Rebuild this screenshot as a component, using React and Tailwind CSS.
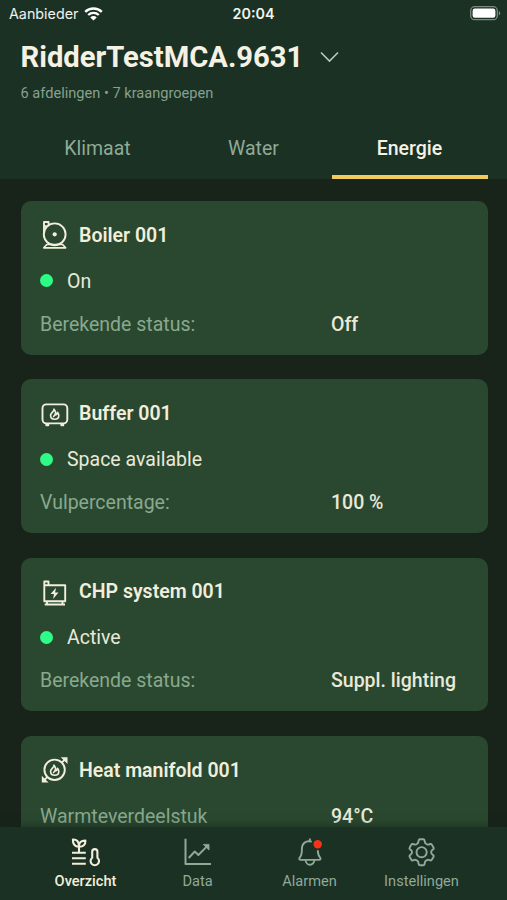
import clsx from "clsx";

const Flame = () => (
  <path
    d="M14 11.200c.4 2.300-3.400 3.500-3.400 6.300 0 2.200 1.800 3.700 4.100 3.700s4.100-1.500 4.100-3.800c0-1.300-.5-2.200-1.300-3-.2 1.500-1.200 2.600-2.800 2.700 1.200-1.900.9-4.200-.7-5.900zM14.700 17.200c-.9.700-1.300 1.300-1.100 2"
    strokeWidth="1.600"
  />
);

const BoilerIcon = () => (
  <>
    <circle cx="14.700" cy="14.300" r="10.900" />
    <circle cx="14.700" cy="14.300" r="2.100" fill="currentColor" stroke="none" />
    <path d="M4 14V2h4.600v3.400M4 6.200h3" />
    <path d="M6.800 24.500h15.800l3 3.300H3.800z" strokeWidth="1.700" />
  </>
);

const BufferIcon = () => (
  <>
    <rect x="2.500" y="6.400" width="24.800" height="19" rx="3.800" />
    <path d="M6.300 25.900v1.400h2v-1.400M21.300 25.900v1.400h2v-1.400" />
    <Flame />
  </>
);

const ChpIcon = () => (
  <>
    <path d="M4.300 24.300V4.500h4.200v3.800h16.700v16zM4.300 8.300h4.200" />
    <path d="M7 24.500v2.500M22.500 24.500v2.500M4.700 27.500h20.300" />
    <path d="M16 10.800l-5.400 6.200h3.400l-.9 5.100 5.400-6.500h-3.400z" fill="currentColor" stroke="none" />
  </>
);

const HeatIcon = () => (
  <>
    <circle cx="14.600" cy="14.800" r="10.200" />
    <path d="M21.500 7.900l4-4M7.700 21.700l-4 4" />
    <path d="M20.800 2.200h6.700v6.700zM1.800 20.700v6.700h6.700z" fill="currentColor" stroke="none" />
    <g transform="translate(0 -1)">
      <Flame />
    </g>
  </>
);

const OverviewIcon = () => (
  <g strokeWidth="2.100">
    <path d="M2 15.700h13.800M2 21.300h13.800M2 26.700h13.800M9 15.500V9" />
    <path d="M9 9.700C4.700 9.700 2.700 7 2.900 2.500 7 2.300 9.200 5 9 9.700zM9 9.700c-.2-4 2-6.200 6.400-6.100.2 4-2.200 6.300-6.400 6.100z" />
    <path d="M22.200 20.700v-6a2.600 2.600 0 0 1 5.200 0v6a4.200 4.200 0 1 1-5.200 0z" />
  </g>
);

const DataIcon = () => (
  <>
    <path d="M3.500 1.700v25.400h25.500" strokeWidth="2" />
    <path d="M6.700 21l6.100-6.500 3.600 3.500 8.300-8.300" />
    <path d="M21.300 7.400h5.700v5.700z" fill="currentColor" strokeWidth="0.800" />
  </>
);

const AlarmIcon = () => (
  <>
    <path d="M15.900 1.500v2.700M17.800 4.700c-6.500-1.700-9.900 2.200-9.900 7.300 0 5-.5 6.900-2.200 8.600-.9 1-.3 2.300.9 2.300h18.600c1.200 0 1.800-1.300.9-2.300-1.500-1.500-2.200-3.200-2.300-7.300" />
    <path d="M11.700 23.200a4.300 4.600 0 0 0 8.600 0" />
    <circle cx="23.700" cy="7.300" r="4.200" fill="#f5331a" stroke="none" />
  </>
);

const SettingsIcon = () => (
  <>
    <path d="M12.700 3.200q.2-1 1.200-1h3.400q1 0 1.200 1l.4 2q.2 1 1.100 1.500l1 .6q.9.500 1.800.2l1.500-.5q1-.3 1.500.600l1.800 3.100q.5.900-.3 1.500l-1.300 1.100q-.8.700-.8 1.900t.8 1.900l1.300 1.100q.8.700.3 1.500l-1.800 3.100q-.5.900-1.500.6l-1.500-.5q-.9-.3-1.800.2l-1 .6q-.9.500-1.100 1.500l-.4 2q-.2 1-1.200 1h-3.400q-1 0-1.200-1l-.4-2q-.2-1-1.100-1.500l-1-.6q-.9-.5-1.800-.2l-1.500.5q-1 .3-1.500-.6l-1.800-3.100q-.5-.9.3-1.500l1.300-1.100q.8-.7.8-1.900t-.8-1.900l-1.300-1.100q-.8-.7-.3-1.500l1.800-3.100q.5-.9 1.500-.6l1.500.5q.9.300 1.800-.2l1-.6q.9-.5 1.100-1.500z" />
    <circle cx="15.600" cy="15.200" r="5.100" />
  </>
);

const Icon = ({ children }) => (
  <svg
    className="size-[30px] shrink-0"
    viewBox="0 0 30 30"
    fill="none"
    stroke="currentColor"
    strokeWidth="1.900"
    strokeLinejoin="round"
  >
    {children}
  </svg>
);

const cards = [
  { title: "Boiler 001", icon: <BoilerIcon />, status: "On", label: "Berekende status:", value: "Off" },
  { title: "Buffer 001", icon: <BufferIcon />, status: "Space available", label: "Vulpercentage:", value: "100 %" },
  { title: "CHP system 001", icon: <ChpIcon />, status: "Active", label: "Berekende status:", value: "Suppl. lighting" },
  { title: "Heat manifold 001", icon: <HeatIcon />, label: "Warmteverdeelstuk", value: "94°C" },
];

const navItems = [
  { label: "Overzicht", icon: <OverviewIcon />, active: true },
  { label: "Data", icon: <DataIcon /> },
  { label: "Alarmen", icon: <AlarmIcon /> },
  { label: "Instellingen", icon: <SettingsIcon /> },
];

const StatusBar = () => (
  <div className="grid h-7 grid-cols-3 items-center pl-[9px] pr-[6px] font-[Inter] text-[14.300px] text-[#f1f3ee]">
    <div className="flex items-center gap-[6px]">
      Aanbieder
      <svg className="mb-px h-[14px] w-[19px]" viewBox="0 0 19 14" fill="none" stroke="white" strokeWidth="2.400">
        <path d="M1.200 4.800a12 12 0 0 1 16.600 0M4.200 8a7.700 7.700 0 0 1 10.600 0" />
        <path d="M9.500 13.600 6.300 10.400a4.600 4.600 0 0 1 6.400 0z" fill="white" stroke="none" />
      </svg>
    </div>
    <div className="pr-[3px] text-center font-semibold">20:04</div>
    <svg className="mb-[2px] h-[15px] w-[31px] justify-self-end" viewBox="0 0 31 15">
      <rect x="0.700" y="0.700" width="26.600" height="13" rx="4" fill="none" stroke="#7d8981" strokeWidth="1.300" />
      <rect x="2.600" y="2.600" width="22.800" height="9.200" rx="2.300" fill="white" />
      <path d="M28.800 5c2 .9 2 3.600 0 4.500z" fill="#7d8981" />
    </svg>
  </div>
);

const Tab = ({ label, active }) => (
  <div
    className={clsx(
      "flex-1 border-b-4 pb-[11px] text-center text-[19.500px] leading-[30px]",
      active ? "border-[#efcb5e] font-medium text-[#f5f2e3]" : "border-transparent text-[#8faa98]"
    )}
  >
    {label}
  </div>
);

const Card = ({ title, icon, status, label, value }) => (
  <section className="h-[153.500px] shrink-0 rounded-[10px] bg-[#2a482f] px-[19.500px] pt-[19px] text-[19.500px] leading-[30px] text-[#e9e9d9]">
    <div className="flex h-[30px] gap-[9px] text-[#f2eedc]">
      <Icon>{icon}</Icon>
      <h2 className="pt-[0.700px] font-semibold">{title}</h2>
    </div>
    {status && (
      <div className="mt-[16.700px] flex items-center gap-[14px]">
        <span className="mb-[2px] size-[13px] rounded-full bg-[#2dfd86]" />
        {status}
      </div>
    )}
    <div className={clsx("flex", status ? "mt-[13px]" : "mt-[16.700px]")}>
      <span className="w-[291px] text-[#89a98f]">{label}</span>
      <span className="font-medium">{value}</span>
    </div>
  </section>
);

export default function App() {
  return (
    <div className="flex h-[900px] w-[507px] flex-col overflow-hidden bg-[#18231a] font-[Roboto,sans-serif]">
      <header className="h-[179px] shrink-0 bg-[#1b3124]">
        <StatusBar />
        <div className="flex items-center gap-[17px] pl-[20.500px] pt-[9px]">
          <h1 className="text-[29.200px] font-bold leading-10 text-[#f5f2e3]">RidderTestMCA.9631</h1>
          <svg className="h-3 w-[19px]" viewBox="0 0 19 12" fill="none" stroke="#b9c8ba" strokeWidth="1.600">
            <path d="M1 1.500 9.500 10 18 1.500" />
          </svg>
        </div>
        <p className="pl-[20.500px] pt-[6px] text-[14.600px] leading-5 text-[#86a08e]">
          6 afdelingen • 7 kraangroepen
        </p>
        <div className="mt-[31px] flex px-[19.500px]">
          <Tab label="Klimaat" />
          <Tab label="Water" />
          <Tab label="Energie" active />
        </div>
      </header>

      <main className="flex min-h-0 flex-1 flex-col gap-[24.800px] overflow-hidden pl-[20.500px] pr-[19.500px] pt-[22.200px]">
        {cards.map((card) => (
          <Card key={card.title} {...card} />
        ))}
      </main>

      <nav className="z-10 flex h-[73px] shrink-0 bg-[#1b3124] px-[29.500px] pt-[10px] shadow-[0_-2px_8px_rgba(20,40,28,0.5)]">
        {navItems.map(({ label, icon, active }) => (
          <div
            key={label}
            className={clsx(
              "flex flex-1 flex-col items-center text-[14.600px]",
              active ? "font-medium text-[#f2eedc]" : "text-[#8faa98]"
            )}
          >
            <div className="pr-[1.500px]">
              <Icon>{icon}</Icon>
            </div>
            <span className="mt-1 leading-5">{label}</span>
          </div>
        ))}
      </nav>
    </div>
  );
}
